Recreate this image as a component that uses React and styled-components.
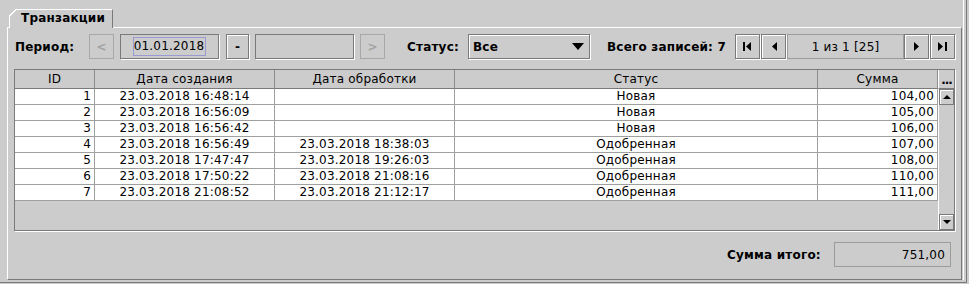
import React from 'react';
import styled, { createGlobalStyle } from 'styled-components';

const GlobalStyle = createGlobalStyle`
  html, body {
    margin: 0;
    padding: 0;
    background: #cccccc;
  }
  body {
    font-family: "DejaVu Sans", "Liberation Sans", sans-serif;
    font-size: 12px;
    letter-spacing: 0.2px;
    color: #000;
  }
  * { box-sizing: border-box; }
`;

const Window = styled.div`
  width: 969px;
  height: 284px;
  padding: 0 2px 1px 0;
  background: #cccccc;
`;

const Frame = styled.div`
  height: 100%;
  border-right: 1px solid #7a7a7a;
  border-bottom: 1px solid #7a7a7a;
  padding: 0 2px 2px 0;
`;

const Inner = styled.div`
  height: 100%;
  border-right: 1px solid #fff;
  padding: 9px 1px 0 7px;
  display: flex;
  flex-direction: column;
`;

const TabStrip = styled.div`
  display: flex;
  height: 18px;
  padding-left: 2px;
  position: relative;
  z-index: 1;
`;

const Tab = styled.div`
  position: relative;
  width: 104px;
  height: 19px;
  background: #cccccc;
  border-top: 1px solid #fff;
  border-left: 1px solid #fff;
  border-right: 1px solid #7a7a7a;
  padding-left: 11px;
  font-weight: bold;
  line-height: 16px;

  &::before {
    content: '';
    position: absolute;
    top: -1px;
    left: -1px;
    width: 7px;
    height: 7px;
    background: linear-gradient(135deg, #cccccc 0 46%, #fff 46% 60%, #cccccc 60%);
  }
`;

const Panel = styled.div`
  flex: 1;
  border-top: 1px solid #fff;
  border-left: 1px solid #fff;
  border-right: 1px solid #7a7a7a;
  border-bottom: 1px solid #7a7a7a;
  padding: 6px 6px 0 6px;
  display: flex;
  flex-direction: column;
`;

const Toolbar = styled.div`
  display: flex;
  align-items: center;
  height: 25px;
  padding-left: 1px;
`;

const Label = styled.span`
  flex: none;
  width: ${p => p.$w}px;
  font-weight: bold;
  white-space: nowrap;
`;

const Button = styled.button`
  flex: none;
  width: ${p => p.$w || 25}px;
  height: 25px;
  margin: 0 ${p => p.$mr || 0}px 0 0;
  padding: 0;
  display: flex;
  align-items: center;
  justify-content: center;
  background: #cccccc;
  font-family: inherit;
  font-size: 12px;
  font-weight: bold;
  color: ${p => (p.disabled ? '#a3a3a3' : '#000')};
  border: 1px solid ${p => (p.disabled ? '#a8a8a8' : '#7a7a7a')};
  box-shadow: ${p => (p.disabled ? 'none' : 'inset 1px 1px 0 #fff, 1px 1px 0 #fff')};
`;

const Field = styled.div`
  flex: none;
  width: ${p => p.$w}px;
  height: 25px;
  margin-right: ${p => p.$mr || 0}px;
  display: flex;
  align-items: center;
  justify-content: ${p => p.$align || 'center'};
  padding: 0 5px;
  background: #cccccc;
  border: 1px solid ${p => (p.$light ? '#9c9c9c' : '#7a7a7a')};
  box-shadow: ${p => (p.$light ? 'none' : '1px 1px 0 #fff')};
  white-space: nowrap;
`;

const Focus = styled.span`
  border: 1px solid #9a9ad0;
  padding: 1px 1px 1px 0;
  line-height: 15px;
`;

const Combo = styled.div`
  flex: none;
  width: 122px;
  height: 25px;
  margin-right: 17px;
  display: flex;
  align-items: center;
  justify-content: space-between;
  padding: 0 5px 0 4px;
  border: 1px solid #7a7a7a;
  box-shadow: inset 1px 1px 0 #fff, 1px 1px 0 #fff;
  font-weight: bold;
`;

const TableBox = styled.div`
  margin-top: 10px;
  width: 941px;
  height: 162px;
  border: 1px solid #7a7a7a;
  box-shadow: 1px 1px 0 #fff;
  display: grid;
  grid-template-columns: 923px 16px;
  grid-template-rows: 19px 1fr;
`;

const HeadRow = styled.div`
  display: flex;
`;

const HeadCell = styled.div`
  flex: none;
  width: ${p => p.$w}px;
  height: 19px;
  border-right: 1px solid #8c8c8c;
  border-bottom: 1px solid #7a7a7a;
  text-align: center;
  line-height: 18px;
  white-space: nowrap;
`;

const Corner = styled.div`
  border-bottom: 1px solid #7a7a7a;
  border-left: 1px solid #fff;
  font-weight: bold;
  text-align: center;
  line-height: 20px;
  letter-spacing: -1px;
`;

const Body = styled.div`
  display: flex;
  flex-direction: column;
`;

const Row = styled.div`
  display: flex;
  height: 16px;
  background: #fff;
`;

const Cell = styled.div`
  flex: none;
  width: ${p => p.$w}px;
  height: 16px;
  border-right: 1px solid #a0a0a0;
  border-bottom: 1px solid #a0a0a0;
  padding: 0 3px;
  text-align: ${p => p.$align || 'center'};
  line-height: 15px;
  white-space: nowrap;
`;

const ScrollBar = styled.div`
  display: flex;
  flex-direction: column;
  justify-content: space-between;
  border-left: 1px solid #fff;
`;

const ScrollBtn = styled.div`
  height: 16px;
  display: flex;
  align-items: center;
  justify-content: center;
  border: 1px solid #7a7a7a;
  box-shadow: inset 1px 1px 0 #fff;
  background: #cccccc;
`;

const Footer = styled.div`
  margin-top: 11px;
  margin-right: 4px;
  display: flex;
  justify-content: flex-end;
  align-items: center;
`;

const Tri = ({ dir }) => {
  const vertical = dir === 'up' || dir === 'down';
  const pts = {
    left: '6,0 6,9 1,4.5',
    right: '0,0 0,9 5,4.5',
    up: '0,4 8,4 4,0',
    down: '0,0 8,0 4,4',
  }[dir];
  return (
    <svg width={vertical ? 8 : 6} height={vertical ? 4 : 9} viewBox={vertical ? '0 0 8 4' : '0 0 6 9'}>
      <polygon points={pts} fill="#000" />
    </svg>
  );
};

const FirstIcon = () => (
  <svg width="9" height="9" viewBox="0 0 9 9">
    <rect x="0" y="0" width="2" height="9" fill="#000" />
    <polygon points="8,0 8,9 3,4.5" fill="#000" />
  </svg>
);

const LastIcon = () => (
  <svg width="9" height="9" viewBox="0 0 9 9">
    <polygon points="0,0 0,9 5,4.5" fill="#000" />
    <rect x="7" y="0" width="2" height="9" fill="#000" />
  </svg>
);

const ComboArrow = () => (
  <svg width="12" height="7" viewBox="0 0 12 7">
    <polygon points="0,0 12,0 6,7" fill="#000" />
  </svg>
);

const columns = [
  { title: 'ID', w: 80, align: 'right' },
  { title: 'Дата создания', w: 180 },
  { title: 'Дата обработки', w: 180 },
  { title: 'Статус', w: 363 },
  { title: 'Сумма', w: 120, align: 'right' },
];

const rows = [
  ['1', '23.03.2018 16:48:14', '', 'Новая', '104,00'],
  ['2', '23.03.2018 16:56:09', '', 'Новая', '105,00'],
  ['3', '23.03.2018 16:56:42', '', 'Новая', '106,00'],
  ['4', '23.03.2018 16:56:49', '23.03.2018 18:38:03', 'Одобренная', '107,00'],
  ['5', '23.03.2018 17:47:47', '23.03.2018 19:26:03', 'Одобренная', '108,00'],
  ['6', '23.03.2018 17:50:22', '23.03.2018 21:08:16', 'Одобренная', '110,00'],
  ['7', '23.03.2018 21:08:52', '23.03.2018 21:12:17', 'Одобренная', '111,00'],
];

export default function App() {
  return (
    <>
      <GlobalStyle />
      <Window>
        <Frame>
          <Inner>
            <TabStrip>
              <Tab>Транзакции</Tab>
            </TabStrip>
            <Panel>
              <Toolbar>
                <Label $w={74}>Период:</Label>
                <Button disabled $mr={6}>&lt;</Button>
                <Field $w={99} $mr={7}>
                  <Focus>01.01.2018</Focus>
                </Field>
                <Button $w={23} $mr={6}>-</Button>
                <Field $w={99} $mr={6} />
                <Button disabled $mr={22}>&gt;</Button>
                <Label $w={61}>Статус:</Label>
                <Combo>
                  <span>Все</span>
                  <ComboArrow />
                </Combo>
                <Label $w={128}>Всего записей: 7</Label>
                <Button $mr={1}><FirstIcon /></Button>
                <Button $mr={1}><Tri dir="left" /></Button>
                <Field $w={117} $light>1 из 1 [25]</Field>
                <Button $mr={1}><Tri dir="right" /></Button>
                <Button><LastIcon /></Button>
              </Toolbar>

              <TableBox>
                <HeadRow>
                  {columns.map(c => (
                    <HeadCell key={c.title} $w={c.w}>{c.title}</HeadCell>
                  ))}
                </HeadRow>
                <Corner>...</Corner>
                <Body>
                  {rows.map(r => (
                    <Row key={r[0]}>
                      {r.map((v, i) => (
                        <Cell key={i} $w={columns[i].w} $align={columns[i].align}>{v}</Cell>
                      ))}
                    </Row>
                  ))}
                </Body>
                <ScrollBar>
                  <ScrollBtn><Tri dir="up" /></ScrollBtn>
                  <ScrollBtn><Tri dir="down" /></ScrollBtn>
                </ScrollBar>
              </TableBox>

              <Footer>
                <Label $w={107}>Сумма итого:</Label>
                <Field $w={117} $light $align="flex-end">751,00</Field>
              </Footer>
            </Panel>
          </Inner>
        </Frame>
      </Window>
    </>
  );
}
